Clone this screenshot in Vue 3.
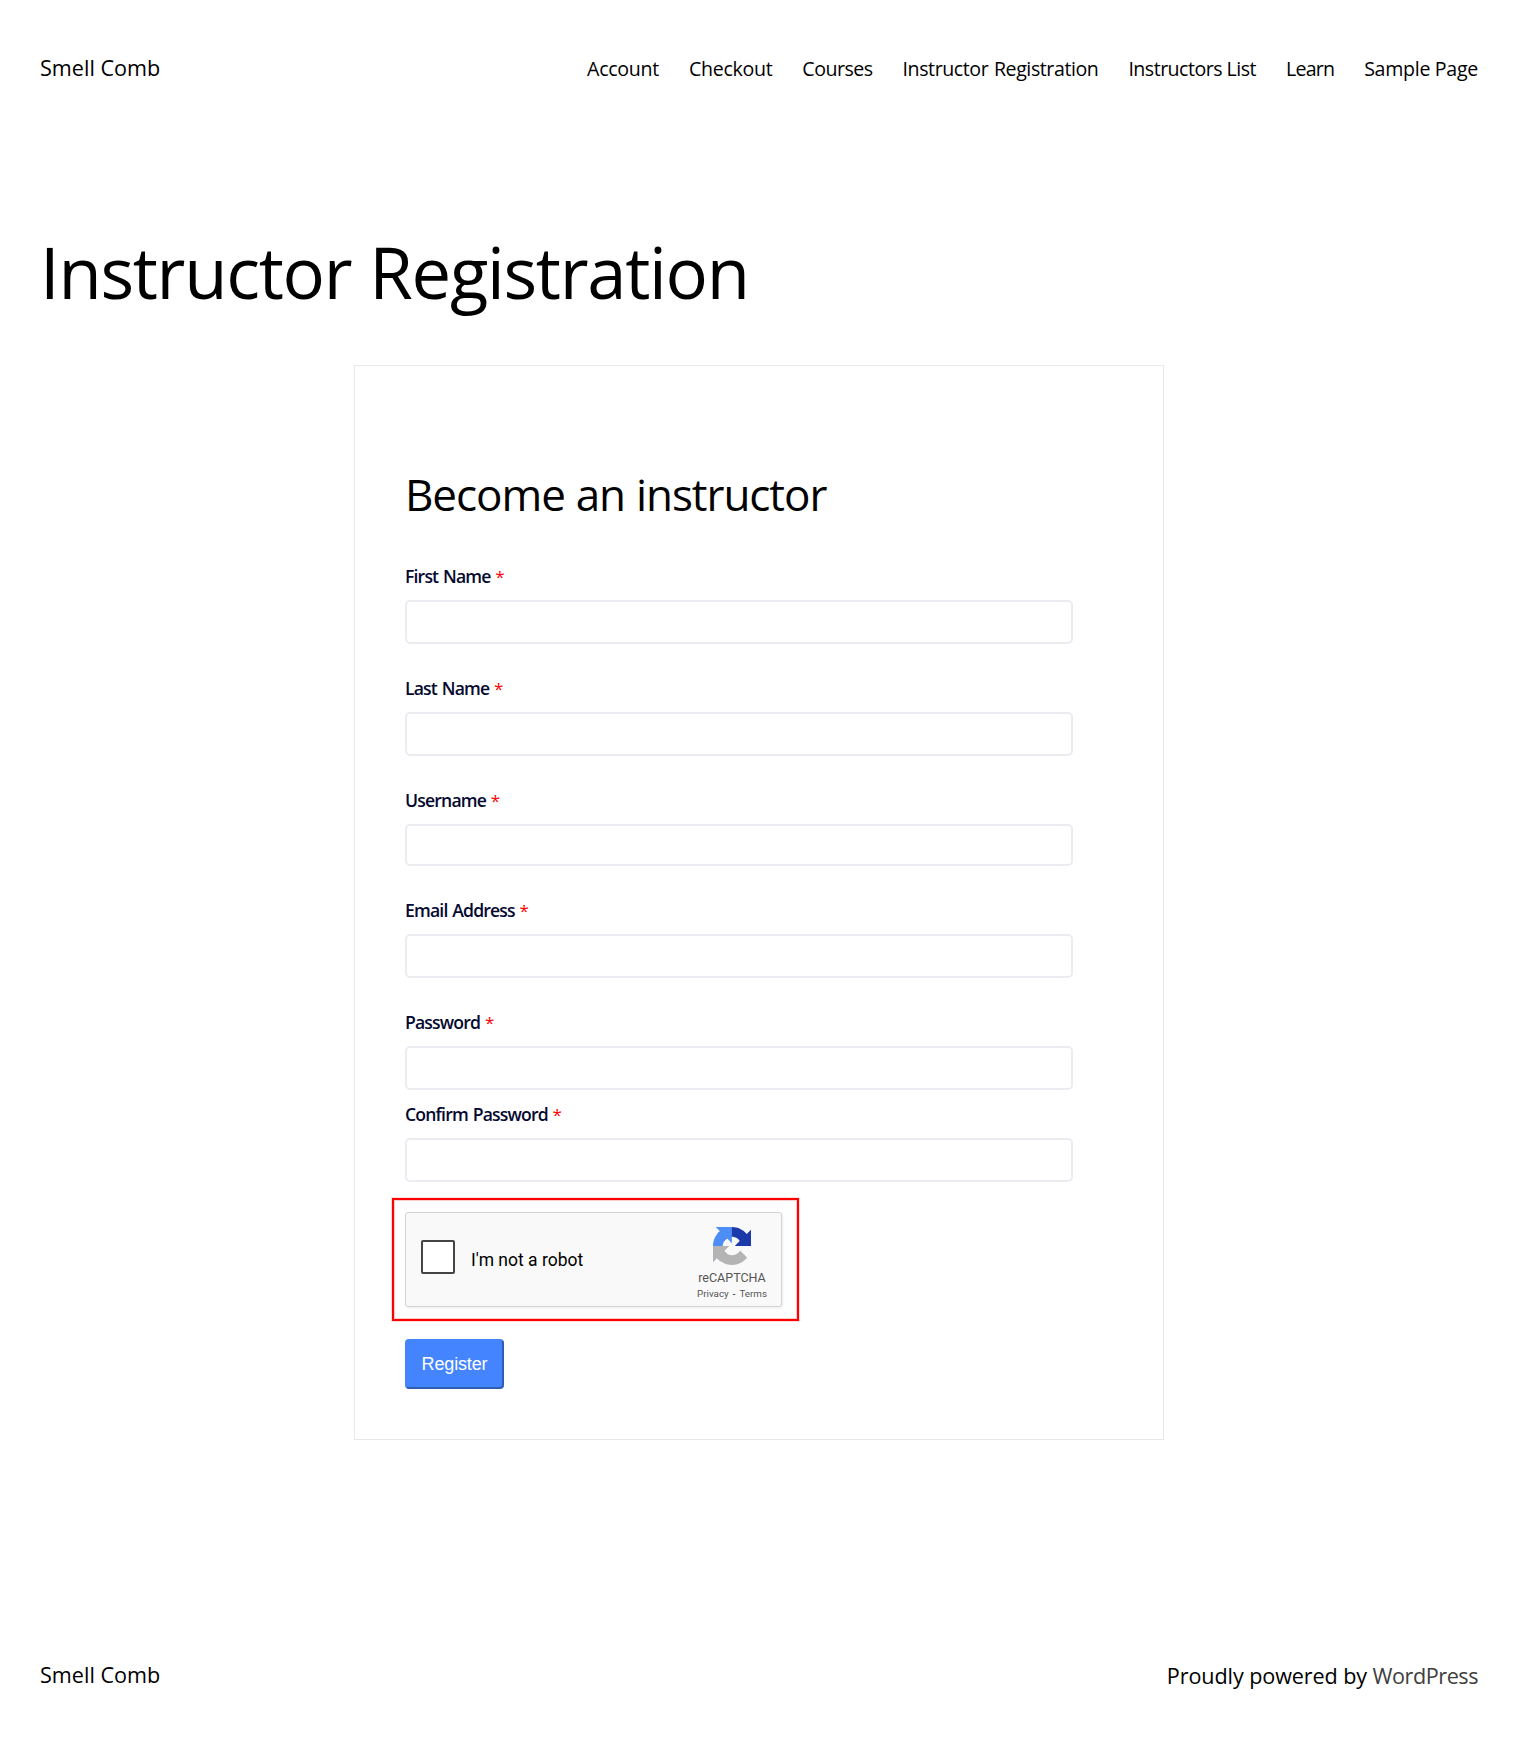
<script setup>
const nav = [
  { text: 'Account', fit: 'normal' },
  { text: 'Checkout', fit: 'normal' },
  { text: 'Courses', fit: 'snug' },
  { text: 'Instructor Registration', fit: 'wide' },
  { text: 'Instructors List', fit: 'snug' },
  { text: 'Learn', fit: 'tight' },
  { text: 'Sample Page', fit: 'normal' },
]
const fields = [
  { id: 'first', label: 'First Name', type: 'text' },
  { id: 'last', label: 'Last Name', type: 'text' },
  { id: 'user', label: 'Username', type: 'text', size: 'short' },
  { id: 'email', label: 'Email Address', type: 'email' },
  { id: 'password', label: 'Password', type: 'password', size: 'tight' },
  { id: 'confirm', label: 'Confirm Password', type: 'password', size: 'last' },
]
</script>

<template>
  <div class="page">
    <header class="bar">
      <a class="brand">Smell Comb</a>
      <nav class="nav">
        <a v-for="item in nav" :key="item.text" :class="item.fit">{{ item.text }}</a>
      </nav>
    </header>

    <h1 class="title">Instructor Registration</h1>

    <main class="card">
      <h2 class="heading">Become an instructor</h2>
      <form @submit.prevent>
        <div v-for="f in fields" :key="f.id" class="field" :class="f.size">
          <label :for="f.id">{{ f.label }} <span class="star">*</span></label>
          <input :id="f.id" :type="f.type" />
        </div>

        <div class="highlight">
          <div class="captcha">
            <span class="check"></span>
            <span class="robot">I'm not a robot</span>
            <div class="badge">
              <svg class="logo" viewBox="0 0 64 64" width="38" height="38">
                <path fill="#1c3aa9" d="M64 31.955l-.033-1.37V4.687l-7.16 7.16C50.948 4.674 42.033.093 32.05.093c-10.4 0-19.622 4.96-25.458 12.64l11.736 11.86a15.55 15.55 0 0 1 4.754-5.334c2.05-1.6 4.952-2.906 8.968-2.906.485 0 .86.057 1.135.163 4.976.393 9.288 3.14 11.828 7.124l-8.307 8.307L64 31.953" />
                <path fill="#4c8df6" d="M31.862.094l-1.37.033H4.594l7.16 7.16C4.58 13.147 0 22.06 0 32.046c0 10.4 4.96 19.622 12.64 25.458L24.5 45.768a15.55 15.55 0 0 1-5.334-4.754c-1.6-2.05-2.906-4.952-2.906-8.968 0-.485.057-.86.163-1.135.393-4.976 3.14-9.288 7.124-11.828l8.307 8.307L31.86.095" />
                <path fill="#b4b4b4" d="M.001 32.045l.033 1.37v25.898l7.16-7.16c5.86 7.173 14.774 11.754 24.76 11.754 10.4 0 19.622-4.96 25.458-12.64l-11.736-11.86a15.55 15.55 0 0 1-4.754 5.334c-2.05 1.6-4.952 2.906-8.968 2.906-.485 0-.86-.057-1.135-.163-4.976-.393-9.288-3.14-11.828-7.124l8.307-8.307c-10.522.04-22.4.066-27.295-.005" />
              </svg>
              <span class="name">reCAPTCHA</span>
              <span class="legal"><a>Privacy</a><i>-</i><a>Terms</a></span>
            </div>
          </div>
        </div>

        <button class="register" type="submit">Register</button>
      </form>
    </main>

    <footer class="bar foot">
      <a class="brand">Smell Comb</a>
      <p class="powered">Proudly powered by <a>WordPress</a></p>
    </footer>
  </div>
</template>

<style>
body {
  margin: 0;
  background: #fff;
}
</style>

<style scoped>
.page {
  box-sizing: border-box;
  height: 1745px;
  padding: 53px 40px 0;
  overflow: hidden;
  font-family: "Segoe UI", "Open Sans", sans-serif;
  color: #000;
}
.bar {
  display: flex;
  justify-content: space-between;
  align-items: baseline;
  height: 30px;
  line-height: 30px;
}
.brand {
  font-size: 21.6px;
  letter-spacing: 0;
}
.nav {
  display: flex;
  gap: 30px;
  font-size: 19.6px;
  letter-spacing: -0.3px;
}
.nav .wide {
  letter-spacing: -0.43px;
  word-spacing: 1px;
}
.nav .snug {
  letter-spacing: -0.52px;
}
.nav .tight {
  letter-spacing: -0.8px;
}
.title {
  margin: 149px 0 53px;
  font-size: 70.6px;
  font-weight: 400;
  line-height: 80px;
  letter-spacing: -1.3px;
  word-spacing: 1px;
}
.card {
  box-sizing: border-box;
  width: 810px;
  height: 1075px;
  margin: 0 0 0 314px;
  padding: 100px 49px 50px 50px;
  border: 1px solid #e8e8ec;
}
.heading {
  margin: 0 0 42px;
  font-size: 44px;
  font-weight: 400;
  line-height: 56px;
  letter-spacing: -1.05px;
  word-spacing: 0.5px;
}
.field {
  width: 668px;
  margin-bottom: 32px;
}
.field.tight {
  margin-bottom: 12px;
}
.field.last {
  margin-bottom: 16px;
}
.field label {
  display: block;
  height: 24px;
  margin-bottom: 12px;
  font-size: 17.6px;
  font-weight: 600;
  line-height: 24px;
  letter-spacing: -0.83px;
  word-spacing: 1px;
  color: #040930;
}
.star {
  font-size: 17px;
  font-weight: 400;
  line-height: 0;
  color: #f00;
}
.field input {
  display: block;
  box-sizing: border-box;
  width: 100%;
  height: 44px;
  padding: 0 12px;
  border: 2px solid #ebebf1;
  border-radius: 5px;
  background: #fff;
  outline: none;
}
.field.short input {
  height: 42px;
}
.highlight {
  box-sizing: border-box;
  width: 407px;
  height: 123px;
  margin: 0 0 18px -13px;
  padding: 12px 11px;
  border: 2px solid #f00;
  box-shadow: 0 0 0 1px rgba(255, 0, 0, 0.14), inset 0 0 0 1px rgba(255, 0, 0, 0.2);
}
.captcha {
  box-sizing: border-box;
  display: flex;
  align-items: center;
  width: 377px;
  height: 95px;
  padding-left: 15px;
  border: 1px solid #d3d3d3;
  border-radius: 3px;
  background: #f9f9f9;
  box-shadow: 1px 1px 3px rgba(0, 0, 0, 0.08);
  font-family: Roboto, sans-serif;
}
.check {
  box-sizing: border-box;
  width: 34px;
  height: 34px;
  margin-bottom: 5px;
  border: 2px solid #444;
  border-radius: 2px;
  background: #fff;
}
.robot {
  margin: 0 auto 0 16px;
  font-size: 17.5px;
  line-height: 24px;
}
.badge {
  display: flex;
  flex-direction: column;
  align-items: center;
  width: 72px;
  margin-right: 13px;
  padding-top: 8px;
  color: #555;
}
.logo {
  display: block;
}
.name {
  margin-top: 5px;
  font-size: 12.5px;
  line-height: 15px;
}
.legal {
  display: flex;
  gap: 4px;
  margin-top: 2px;
  font-size: 9.8px;
  line-height: 14px;
}
.legal i {
  font-style: normal;
  color: #000;
}
.register {
  display: block;
  box-sizing: border-box;
  width: 99px;
  height: 50px;
  padding: 0;
  border: 2px solid;
  border-color: #4485ff #2f5db3 #2f5db3 #4485ff;
  border-radius: 4px;
  background: #4485ff;
  color: #fff;
  font: 18px/24px "Liberation Sans", Arial, sans-serif;
  letter-spacing: -0.15px;
}
.foot {
  align-items: flex-start;
  margin-top: 220px;
}
.powered {
  margin: 1px 0 0;
  font-size: 21.6px;
  letter-spacing: -0.1px;
}
.powered a {
  letter-spacing: -0.45px;
  color: #404040;
}
</style>
